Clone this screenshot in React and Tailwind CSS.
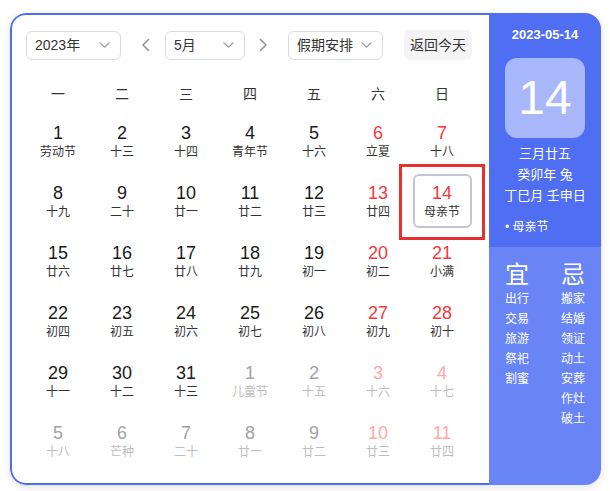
import { useState } from 'react';

const weeks = [
  [['1', '劳动节'], ['2', '十三'], ['3', '十四'], ['4', '青年节'], ['5', '十六'], ['6', '立夏'], ['7', '十八']],
  [['8', '十九'], ['9', '二十'], ['10', '廿一'], ['11', '廿二'], ['12', '廿三'], ['13', '廿四'], ['14', '母亲节']],
  [['15', '廿六'], ['16', '廿七'], ['17', '廿八'], ['18', '廿九'], ['19', '初一'], ['20', '初二'], ['21', '小满']],
  [['22', '初四'], ['23', '初五'], ['24', '初六'], ['25', '初七'], ['26', '初八'], ['27', '初九'], ['28', '初十']],
  [['29', '十一'], ['30', '十二'], ['31', '十三'], ['1', '儿童节', true], ['2', '十五', true], ['3', '十六', true], ['4', '十七', true]],
  [['5', '十八', true], ['6', '芒种', true], ['7', '二十', true], ['8', '廿一', true], ['9', '廿二', true], ['10', '廿三', true], ['11', '廿四', true]],
];

const weekdays = ['一', '二', '三', '四', '五', '六', '日'];
const good = ['出行', '交易', '旅游', '祭祀', '割蜜'];
const bad = ['搬家', '结婚', '领证', '动土', '安葬', '作灶', '破土'];

const ChevronDown = () => (
  <svg width="11" height="6" viewBox="0 0 11 6" fill="none" stroke="#9aa0ad" strokeWidth="1.2">
    <path d="M0.5 0.5 L5.5 5.2 L10.5 0.5" />
  </svg>
);

const Select = ({ label, width }) => (
  <div
    className={`flex h-[29px] items-center justify-between rounded-[6px] border border-[#d9dbe1] pl-[8px] pr-[10px] text-[14px] text-[#333] ${width}`}
  >
    <span>{label}</span>
    <ChevronDown />
  </div>
);

const Arrow = ({ dir }) => (
  <svg width="8" height="14" viewBox="0 0 8 14" fill="none" stroke="#8d929e" strokeWidth="1.5">
    {dir === 'left' ? <path d="M7 1 L1 7 L7 13" /> : <path d="M1 1 L7 7 L1 13" />}
  </svg>
);

const DayCell = ({ day, lunar, other, weekend, selected }) => {
  let numColor = 'text-[#1a1a1a]';
  let lunarColor = 'text-[#333]';
  if (weekend) numColor = 'text-[#f5383b]';
  if (other) {
    numColor = weekend ? 'text-[#ffa8a8]' : 'text-[#a3a3a3]';
    lunarColor = 'text-[#bdbdbd]';
  }
  return (
    <div className="flex justify-center">
      <div
        className={`relative flex h-[54px] w-[59px] flex-col items-center justify-center rounded-[6px] ${
          selected ? 'border-2 border-[#c3c6ce]' : ''
        }`}
      >
        <span className={`text-[18px] leading-[22px] ${numColor}`}>{day}</span>
        <span className={`text-[12px] leading-[16px] ${lunarColor}`}>{lunar}</span>
        {selected && (
          <div className="pointer-events-none absolute left-[-16px] top-[-12px] h-[76px] w-[86px] border-[3px] border-[#e8312f]" />
        )}
      </div>
    </div>
  );
};

export default function App() {
  const [selected] = useState('14');

  return (
    <div className="min-h-[491px] bg-white pl-[10px] pt-[13px] font-['Liberation_Sans','Noto_Sans_CJK_SC',sans-serif]">
      <div className="flex h-[472px] w-[591px] overflow-hidden rounded-[16px] shadow-[0_2px_8px_rgba(0,0,0,0.12)]">
        {/* calendar side */}
        <div className="flex-1 rounded-l-[16px] border-2 border-r-0 border-[#4e6ef2] bg-white pl-[14px] pt-[15px]">
          <div className="flex items-center">
            <Select label="2023年" width="w-[95px]" />
            <div className="ml-[21px] mr-[15px] flex">
              <Arrow dir="left" />
            </div>
            <Select label="5月" width="w-[80px]" />
            <div className="ml-[14px] mr-[21px] flex">
              <Arrow dir="right" />
            </div>
            <Select label="假期安排" width="w-[95px]" />
            <button className="ml-[21px] h-[30px] w-[68px] rounded-[6px] bg-[#f4f4f5] text-[14px] text-[#333]">
              返回今天
            </button>
          </div>

          <div className="mt-[19px] grid h-[30px] w-[448px] grid-cols-7 items-center text-center text-[14px] text-[#333]">
            {weekdays.map((w) => (
              <span key={w}>{w}</span>
            ))}
          </div>

          <div className="mt-[5px] grid w-[448px] grid-cols-7 gap-y-[6px]">
            {weeks.map((week, wi) =>
              week.map(([day, lunar, other], di) => (
                <DayCell
                  key={`${wi}-${di}`}
                  day={day}
                  lunar={lunar}
                  other={other}
                  weekend={di >= 5}
                  selected={!other && day === selected}
                />
              ))
            )}
          </div>
        </div>

        {/* detail side */}
        <div className="flex w-[112px] flex-col text-white">
          <div className="flex flex-col items-center bg-[#4f6ef2] pb-[11px] pt-[13px]">
            <div className="text-[13px] font-bold leading-[18px]">2023-05-14</div>
            <div className="mt-[14px] flex h-[80px] w-[80px] items-center justify-center rounded-[12px] bg-[#a8b7f9] text-[48px] leading-none">
              14
            </div>
            <div className="mt-[5px] flex flex-col items-center text-[13px] leading-[21px]">
              <span>三月廿五</span>
              <span>癸卯年 兔</span>
              <span>丁巳月 壬申日</span>
            </div>
            <div className="mt-[12px] w-full pl-[16px] text-[12px] leading-[18px]">• 母亲节</div>
          </div>
          <div className="flex flex-1 gap-[32px] bg-[#6985f5] pl-[16px] pt-[14px]">
            <div className="flex w-[24px] flex-col items-center">
              <span className="text-[24px] leading-[28px]">宜</span>
              {good.map((g) => (
                <span key={g} className="text-[12px] leading-[20px]">
                  {g}
                </span>
              ))}
            </div>
            <div className="flex w-[24px] flex-col items-center">
              <span className="text-[24px] leading-[28px]">忌</span>
              {bad.map((b) => (
                <span key={b} className="text-[12px] leading-[20px]">
                  {b}
                </span>
              ))}
            </div>
          </div>
        </div>
      </div>
    </div>
  );
}
